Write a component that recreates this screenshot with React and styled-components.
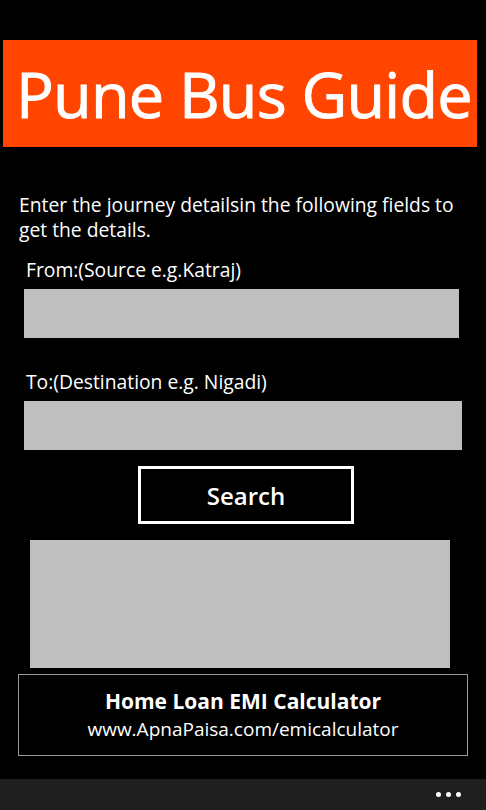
import React from 'react'
import styled, { createGlobalStyle } from 'styled-components'

const Global = createGlobalStyle`
  html, body {
    margin: 0;
    padding: 0;
    background: #000;
  }
  * { box-sizing: border-box; }
`

const Screen = styled.div`
  width: 486px;
  height: 810px;
  background: #000;
  color: #fff;
  font-family: "Open Sans", "Noto Sans", sans-serif;
  display: flex;
  flex-direction: column;
  overflow: hidden;
`

const Banner = styled.div`
  margin: 40px 0 0 3px;
  width: 474px;
  height: 107px;
  background: #ff4500;
  display: flex;
  align-items: center;
  padding-left: 13px;
`

const Title = styled.h1`
  margin: 0;
  font-size: 63px;
  font-weight: 400;
  letter-spacing: -0.8px;
  line-height: 1;
  white-space: nowrap;
  -webkit-text-stroke: 0.9px #fff;
`

const Intro = styled.p`
  margin: 45px 0 0 19px;
  width: 455px;
  font-size: 19.3px;
  line-height: 25px;
`

const Label = styled.div`
  margin: ${p => p.top}px 0 0 26px;
  font-size: 19.3px;
  line-height: 25px;
`

const Input = styled.div`
  margin: ${p => p.top}px 0 0 24px;
  width: ${p => p.w}px;
  height: 49px;
  background: #bfbfbf;
`

const SearchButton = styled.button`
  margin: 16px 0 0 138px;
  width: 216px;
  height: 58px;
  background: #000;
  border: 3px solid #fff;
  color: #fff;
  font-family: inherit;
  font-size: 24px;
  font-weight: 600;
  padding: 0;
`

const AdSlot = styled.div`
  margin: 16px 0 0 30px;
  width: 420px;
  height: 128px;
  background: #bfbfbf;
`

const Promo = styled.div`
  margin: 6px 0 0 18px;
  width: 450px;
  height: 82px;
  border: 1px solid #9a9a9a;
  display: flex;
  flex-direction: column;
  align-items: center;
  justify-content: center;
  padding-bottom: 2px;
`

const PromoTitle = styled.div`
  font-size: 21px;
  font-weight: 700;
  line-height: 29px;
`

const PromoLink = styled.div`
  font-size: 19px;
  line-height: 26px;
`

const AppBar = styled.div`
  margin-top: auto;
  height: 31px;
  background: #1f1f1f;
  display: flex;
  justify-content: flex-end;
  align-items: center;
  gap: 5px;
  padding-right: 25px;
`

const Dot = styled.span`
  width: 5px;
  height: 5px;
  border-radius: 50%;
  background: #fff;
`

export default function App() {
  return (
    <Screen>
      <Global />
      <Banner>
        <Title>Pune Bus Guide</Title>
      </Banner>
      <Intro>Enter the journey detailsin the following fields to get the details.</Intro>
      <Label top={15}>From:(Source e.g.Katraj)</Label>
      <Input top={7} w={435} />
      <Label top={31}>To:(Destination e.g. Nigadi)</Label>
      <Input top={7} w={438} />
      <SearchButton>Search</SearchButton>
      <AdSlot />
      <Promo>
        <PromoTitle>Home Loan EMI Calculator</PromoTitle>
        <PromoLink>www.ApnaPaisa.com/emicalculator</PromoLink>
      </Promo>
      <AppBar>
        <Dot />
        <Dot />
        <Dot />
      </AppBar>
    </Screen>
  )
}
